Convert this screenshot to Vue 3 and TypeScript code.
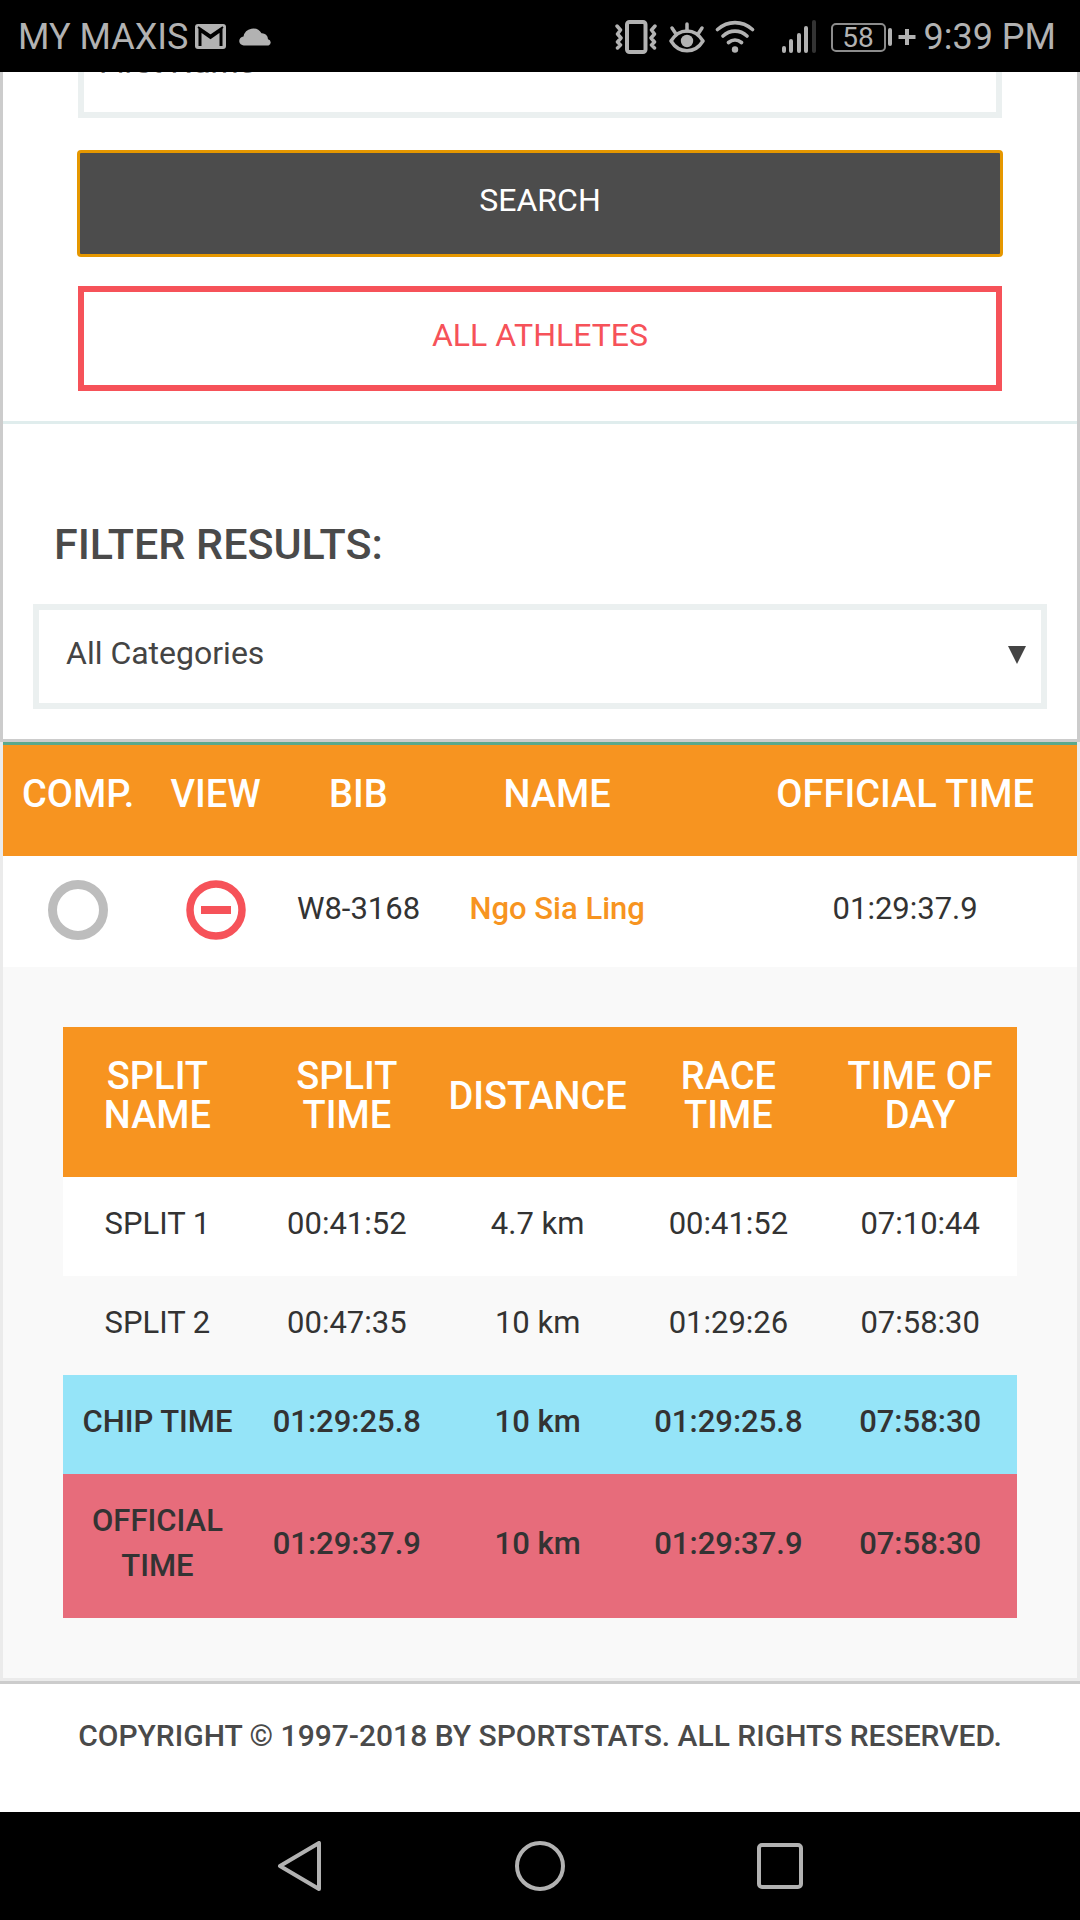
<script setup lang="ts">
import { ref } from 'vue'

interface Split {
  name: string
  splitTime: string
  distance: string
  raceTime: string
  timeOfDay: string
  kind?: 'chip' | 'official'
}

const firstName = ref('')
const category = ref('all')
const compare = ref(false)
const expanded = ref(true)

const splitHeadings: string[] = ['SPLIT NAME', 'SPLIT TIME', 'DISTANCE', 'RACE TIME', 'TIME OF DAY']

const splits: Split[] = [
  { name: 'SPLIT 1', splitTime: '00:41:52', distance: '4.7 km', raceTime: '00:41:52', timeOfDay: '07:10:44' },
  { name: 'SPLIT 2', splitTime: '00:47:35', distance: '10 km', raceTime: '01:29:26', timeOfDay: '07:58:30' },
  { name: 'CHIP TIME', splitTime: '01:29:25.8', distance: '10 km', raceTime: '01:29:25.8', timeOfDay: '07:58:30', kind: 'chip' },
  { name: 'OFFICIAL TIME', splitTime: '01:29:37.9', distance: '10 km', raceTime: '01:29:37.9', timeOfDay: '07:58:30', kind: 'official' },
]
</script>

<template>
  <div class="screen">
    <header class="status">
      <span class="carrier">MY MAXIS</span>
      <svg class="gmail" width="32" height="26" viewBox="0 0 32 26" aria-hidden="true">
        <rect x="0" y="0" width="31" height="25" rx="3" fill="#b2b2b2" />
        <path d="M5 22V6L15.500 13.500L26 6V22" fill="none" stroke="#000" stroke-width="3" />
        <path d="M3 3L15.500 11.500L28 3" fill="none" stroke="#000" stroke-width="2" />
      </svg>
      <svg class="cloud" width="34" height="20" viewBox="0 0 34 20" aria-hidden="true">
        <path d="M5 18.500a4.500 4.500 0 0 1-.5-9a9.800 9.800 0 0 1 18-3.200a6 6 0 0 1 6.500 6a3.200 3.200 0 0 1 .5 6.200z" fill="#b2b2b2" />
      </svg>
      <span class="spacer"></span>
      <svg class="vibrate" width="42" height="34" viewBox="0 0 42 34" fill="none" stroke="#b2b2b2" aria-hidden="true">
        <rect x="12" y="2" width="18.500" height="30" rx="2.500" stroke-width="4" />
        <path d="M2 6l3.500 4l-3 4l3.500 4l-3.500 4l3 3l-3 3M40 6l-3.500 4l3 4l-3.500 4l3.500 4l-3 3l3 3" stroke-width="3.500" stroke-linecap="round" stroke-linejoin="round" />
      </svg>
      <svg class="eye" width="36" height="34" viewBox="0 0 36 34" fill="none" stroke="#b2b2b2" stroke-linecap="round" aria-hidden="true">
        <path d="M2 21C10 7.500 26 7.500 34 21C26 34 10 34 2 21Z" stroke-width="3.500" stroke-linejoin="round" />
        <circle cx="18" cy="21" r="6.200" fill="#b2b2b2" stroke="none" />
        <path d="M18 4v7M3 8l4 6M33 8l-4 6" stroke-width="3.500" />
      </svg>
      <svg class="wifi" width="40" height="34" viewBox="0 0 40 34" fill="none" stroke="#b2b2b2" stroke-width="3.600" stroke-linecap="round" aria-hidden="true">
        <path d="M2.500 9.500C13 .3 27 .3 37.500 9.500M8 16c7-6.500 17-6.500 24 0M13.500 22.500c4-3.300 9-3.300 13 0" />
        <circle cx="20" cy="29.500" r="3.200" fill="#b2b2b2" stroke="none" />
      </svg>
      <svg class="signal" width="34" height="34" viewBox="0 0 34 34" fill="#b2b2b2" aria-hidden="true">
        <rect x="0" y="26" width="4" height="7" rx="2" />
        <rect x="7" y="19" width="4" height="14" rx="2" />
        <rect x="15" y="13" width="4" height="20" rx="2" />
        <rect x="22" y="6" width="4" height="27" rx="2" />
        <rect x="30" y="0" width="4" height="33" rx="2" fill="#333" />
      </svg>
      <span class="battery">58</span>
      <svg class="charge" width="28" height="18" viewBox="0 0 28 18" fill="#b2b2b2" aria-hidden="true">
        <rect x="0" y="0" width="4" height="18" rx="2" />
        <path d="M17 1h4v6h6.500v4h-6.500v6h-4v-6h-6.500v-4h6.500z" />
      </svg>
      <span class="clock">9:39 PM</span>
    </header>

    <main class="page">
      <section class="controls">
        <form class="search" @submit.prevent>
          <input v-model="firstName" class="field" type="text" placeholder="First Name" aria-label="First Name" />
          <button class="btn dark" type="submit">SEARCH</button>
          <button class="btn outline" type="button">ALL ATHLETES</button>
        </form>
        <div class="filter">
          <label class="filter-title" for="category">FILTER RESULTS:</label>
          <div class="select-wrap">
            <select id="category" v-model="category">
              <option value="all">All Categories</option>
            </select>
            <svg class="arrow" width="18" height="18" viewBox="0 0 18 18" aria-hidden="true">
              <path d="M0 0h18L9 18z" fill="#444" />
            </svg>
          </div>
        </div>
      </section>

      <section class="results">
        <table class="athletes">
          <colgroup>
            <col class="c-comp" /><col class="c-view" /><col class="c-bib" /><col class="c-name" /><col />
          </colgroup>
          <thead>
            <tr>
              <th>COMP.</th>
              <th>VIEW</th>
              <th>BIB</th>
              <th>NAME</th>
              <th class="official">OFFICIAL TIME</th>
            </tr>
          </thead>
          <tbody>
            <tr>
              <td class="mark"><input v-model="compare" class="comp" type="checkbox" aria-label="Compare Ngo Sia Ling" /></td>
              <td class="mark">
                <button class="toggle" type="button" aria-label="Hide splits" :aria-expanded="expanded" @click="expanded = !expanded">
                  <svg width="60" height="60" viewBox="0 0 60 60" aria-hidden="true">
                    <circle cx="30" cy="30" r="26" fill="none" stroke="#f65259" stroke-width="7.500" />
                    <path d="M15 26h30v8H15z" fill="#f65259" />
                  </svg>
                </button>
              </td>
              <td>W8-3168</td>
              <td><a href="#">Ngo Sia Ling</a></td>
              <td class="official">01:29:37.9</td>
            </tr>
          </tbody>
        </table>

        <div v-if="expanded" class="details">
          <table class="splits">
            <colgroup>
              <col class="s-a" /><col class="s-b" /><col class="s-c" /><col class="s-b" /><col />
            </colgroup>
            <thead>
              <tr>
                <th v-for="h in splitHeadings" :key="h">{{ h }}</th>
              </tr>
            </thead>
            <tbody>
              <tr v-for="s in splits" :key="s.name" :class="s.kind">
                <td>{{ s.name }}</td>
                <td>{{ s.splitTime }}</td>
                <td>{{ s.distance }}</td>
                <td>{{ s.raceTime }}</td>
                <td>{{ s.timeOfDay }}</td>
              </tr>
            </tbody>
          </table>
        </div>
      </section>

      <footer class="copyright">COPYRIGHT © 1997-2018 BY SPORTSTATS. ALL RIGHTS RESERVED.</footer>
    </main>

    <nav class="softkeys">
      <button type="button" aria-label="Back">
        <svg width="50" height="50" viewBox="0 0 50 50" fill="none" stroke="#b2b2b2" stroke-width="4" stroke-linejoin="round">
          <path d="M5 25L44 2V48Z" />
        </svg>
      </button>
      <button type="button" aria-label="Home">
        <svg width="50" height="50" viewBox="0 0 50 50" fill="none" stroke="#b2b2b2" stroke-width="4">
          <circle cx="25" cy="25" r="23" />
        </svg>
      </button>
      <button type="button" aria-label="Recent apps">
        <svg width="50" height="50" viewBox="0 0 50 50" fill="none" stroke="#b2b2b2" stroke-width="4">
          <rect x="4" y="4" width="42" height="42" rx="3" />
        </svg>
      </button>
    </nav>
  </div>
</template>

<style>
body {
  margin: 0;
  background: #fff;
}
</style>

<style scoped>
* {
  box-sizing: border-box;
}

.screen {
  display: flex;
  flex-direction: column;
  min-height: 100vh;
  font-family: Roboto, "Liberation Sans", sans-serif;
  font-size: 31px;
  line-height: 45px;
  color: #333;
}

button,
input,
select {
  margin: 0;
  font: inherit;
  border-radius: 0;
  appearance: none;
}

/* Status bar */
.status {
  position: relative;
  z-index: 1;
  display: flex;
  align-items: center;
  height: 72px;
  padding: 2px 24px 0 18px;
  background: #000;
  color: #b2b2b2;
  font-size: 36px;
}

.spacer {
  flex: 1;
}

.gmail {
  margin-left: 7px;
}

.cloud {
  margin-left: 12px;
}

.eye {
  margin-left: 12px;
}

.wifi {
  margin-left: 10px;
}

.signal {
  margin-left: 27px;
}

.battery {
  width: 55px;
  height: 29px;
  margin-left: 15px;
  border: 2px solid #8c8c8c;
  border-radius: 5px;
  font-size: 28px;
  line-height: 25px;
  text-align: center;
}

.charge {
  margin-left: 2px;
}

.clock {
  margin-left: 8px;
}

/* Search and filter panel */
.page {
  flex: 1;
}

.controls {
  border: 3px solid #ccc;
  border-top: 0;
  font-size: 32px;
}

.search {
  display: flex;
  flex-direction: column;
  margin-top: -59px;
  padding: 0 75px 30px;
  border-bottom: 3px solid #e0eded;
}

.field,
.btn {
  width: 100%;
  height: 105px;
  padding: 0 15px 7px;
  background: #fff;
  border: 6px solid #ebf0f0;
}

.field::placeholder {
  color: #757575;
  opacity: 1;
}

.btn.dark {
  margin-top: 33px;
  background: #4c4c4c;
  border-color: #4c4c4c;
  color: #fff;
  outline: 3px solid #e59700;
  outline-offset: -2px;
  border-radius: 3px;
}

.btn.outline {
  margin-top: 30px;
  border-color: #f65259;
  color: #f65259;
}

.filter {
  padding: 96px 30px 30px;
}

.filter-title {
  display: block;
  margin-bottom: 36px;
  padding-left: 21px;
  font-size: 43px;
  font-weight: 500;
  line-height: 48px;
  color: #4a4a4a;
}

.select-wrap {
  position: relative;
}

select {
  display: block;
  width: 100%;
  height: 105px;
  padding: 0 60px 7px 27px;
  background: #fff;
  border: 6px solid #ebf0f0;
  color: #444;
}

.arrow {
  position: absolute;
  right: 21px;
  top: 42px;
  pointer-events: none;
}

/* Tables */
.results {
  border: 3px solid #ebebeb;
  border-top: 0;
}

table {
  width: 100%;
  border-collapse: collapse;
  table-layout: fixed;
}

th {
  padding: 30px 0 42px;
  background: #f79420;
  color: #fff;
  font-size: 38px;
  font-weight: 500;
  line-height: 39px;
}

td {
  padding: 24px 0 30px;
  text-align: center;
}

.athletes {
  border-top: 3px solid #5aa88c;
  border-collapse: separate;
  border-spacing: 0;
}

.athletes .mark {
  padding: 24px 0 27px;
  line-height: 0;
}

.athletes .official {
  padding-left: 58px;
}

.c-comp {
  width: 14%;
}

.c-view {
  width: 11.6%;
}

.c-bib {
  width: 15%;
}

.c-name {
  width: 22%;
}

.comp {
  width: 60px;
  height: 60px;
  border: 9px solid #bdbdbd;
  border-radius: 50%;
  vertical-align: top;
}

.toggle {
  padding: 0;
  border: 0;
  background: none;
  line-height: 0;
  vertical-align: top;
}

.athletes a {
  color: #f79420;
  font-weight: 500;
  text-decoration: none;
}

.details {
  padding: 60px;
  background: #f9f9f9;
}

.splits th {
  padding-left: 12px;
  padding-right: 12px;
}

.splits th:nth-child(3) {
  padding-left: 0;
  padding-right: 0;
}

.s-a {
  width: 19.8%;
}

.s-b {
  width: 19.9%;
}

.s-c {
  width: 20.1%;
}

.splits tbody tr:nth-child(odd) {
  background: #fff;
}

.splits tbody tr.chip {
  background: #95e4f8;
  font-weight: 500;
}

.splits tbody tr.official {
  background: #e76c7b;
  font-weight: 500;
}

.splits .chip td,
.splits .official td {
  padding-left: 16px;
  padding-right: 16px;
}

/* Footer */
.copyright {
  padding: 32px 16px 56px;
  border-top: 3px solid #ccc;
  font-size: 30px;
  font-weight: 500;
  line-height: 40px;
  text-align: center;
  color: #4a4a4a;
}

.softkeys {
  display: grid;
  grid-template-columns: repeat(3, 1fr);
  padding: 0 16.667%;
  background: #000;
}

.softkeys button {
  display: flex;
  align-items: center;
  justify-content: center;
  height: 108px;
  padding: 0;
  border: 0;
  background: none;
}
</style>
